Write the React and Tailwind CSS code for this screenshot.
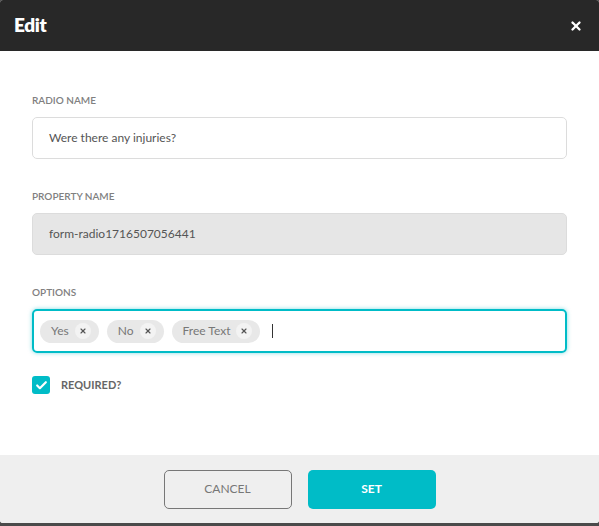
import { X, Check } from 'lucide-react'

const OPTIONS = ['Yes', 'No', 'Free Text']

function Label({ children }) {
  return <div className="mb-[9px] text-[10px] font-semibold uppercase text-[#808080]">{children}</div>
}

export default function App() {
  return (
    <div className="h-[526px] w-[599px] bg-[#4a4a4a]" style={{ fontFamily: 'Lato, "Open Sans", sans-serif' }}>
      <div className="flex h-[523px] flex-col overflow-hidden rounded-[3px] bg-white">
        <header className="flex h-[51px] shrink-0 items-center justify-between bg-[#282828] pl-[14px] pr-[16px]">
          <h1 className="text-[19px] font-extrabold tracking-[-0.02em] text-white">Edit</h1>
          <X className="h-[14px] w-[14px] text-white" strokeWidth={4} />
        </header>

        <div className="flex-1 px-[32px] pt-[42px]">
          <Label>Radio name</Label>
          <div className="flex h-[42px] items-center rounded-[5px] border border-[#dcdcdc] px-[16px] text-[12px] text-[#555]">
            Were there any injuries?
          </div>

          <div className="mt-[30px]">
            <Label>Property name</Label>
            <div className="flex h-[42px] items-center rounded-[5px] border border-[#dcdcdc] bg-[#e6e6e6] px-[16px] text-[12px] text-[#555]">
              form-radio1716507056441
            </div>
          </div>

          <div className="mt-[30px]">
            <Label>Options</Label>
            <div className="flex h-[44px] items-center gap-[8px] rounded-[5px] border-2 border-[#00bcc7] px-[6px] shadow-[0_0_4px_rgba(0,188,199,0.5)]">
              {OPTIONS.map((o) => (
                <span key={o} className="flex h-[23px] items-center gap-[6px] rounded-full bg-[#e8e8e8] pl-[11px] pr-[8px] text-[12px] text-[#777]">
                  {o}
                  <span className="flex h-[16px] w-[16px] items-center justify-center rounded-full bg-[#f3f3f3]">
                    <X className="h-[8px] w-[8px] text-[#555]" strokeWidth={3.5} />
                  </span>
                </span>
              ))}
              <span className="ml-[4px] h-[14px] w-px bg-[#333]" />
            </div>
          </div>

          <label className="mt-[23px] flex items-center gap-[11px]">
            <span className="flex h-[18px] w-[18px] items-center justify-center rounded-[3px] bg-[#00bcc7]">
              <Check className="h-[13px] w-[13px] text-white" strokeWidth={4} />
            </span>
            <span className="text-[11px] font-bold uppercase text-[#666]">Required?</span>
          </label>
        </div>

        <footer className="flex h-[68px] shrink-0 items-center justify-center gap-[16px] bg-[#efefef]">
          <button className="h-[39px] w-[128px] rounded-[5px] border border-[#777] text-[12px] uppercase text-[#777]">
            Cancel
          </button>
          <button className="h-[39px] w-[128px] rounded-[5px] bg-[#00bcc7] text-[12px] font-bold uppercase text-white">
            Set
          </button>
        </footer>
      </div>
    </div>
  )
}
